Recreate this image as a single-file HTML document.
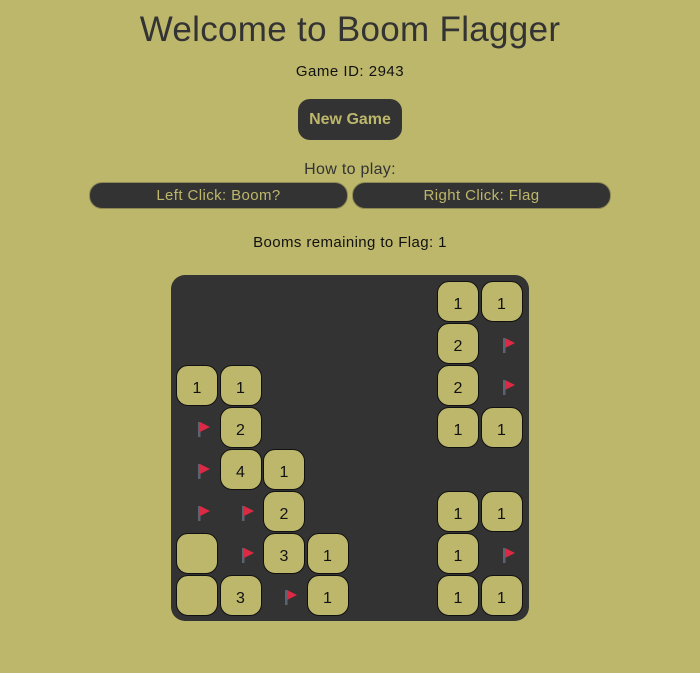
<!DOCTYPE html>
<html><head><style>
body{margin:0;width:700px;height:673px;background:#bdb76b;font-family:"Liberation Sans",sans-serif;color:#111;position:relative;overflow:hidden}
.a{position:absolute;left:0;width:700px;text-align:center}
h1{margin:0;font-weight:normal;font-size:35px;color:#333;letter-spacing:0.3px}
.btn{position:absolute;background:#333;color:#bdb76b}
.board{position:absolute;left:171px;top:275px;width:358px;height:346px;background:#333;border-radius:14px}
.c{position:absolute;width:40px;height:39px;border:1px solid #111;border-radius:12px;background:#bdb76b;text-align:center;line-height:46px;font-size:16px;color:#111}
.f{position:absolute;width:42px;height:41px}
</style></head><body>
<div class="a" style="top:10px"><h1>Welcome to Boom Flagger</h1></div>
<div class="a" style="top:63px;font-size:15px;letter-spacing:0.5px">Game ID: 2943</div>
<div class="btn" style="left:298px;top:99px;width:104px;height:41px;border-radius:12px;font-weight:bold;font-size:16px;line-height:41px;text-align:center">New Game</div>
<div class="a" style="top:161px;font-size:16px;color:#333;letter-spacing:0.3px">How to play:</div>
<div class="btn" style="left:89px;top:182px;width:257px;height:25px;border-radius:13px;border:1px solid #8f8a55;font-size:15px;line-height:25px;text-align:center;letter-spacing:0.4px">Left Click: Boom?</div>
<div class="btn" style="left:352px;top:182px;width:257px;height:25px;border-radius:13px;border:1px solid #8f8a55;font-size:15px;line-height:25px;text-align:center;letter-spacing:0.4px">Right Click: Flag</div>
<div class="a" style="top:234px;font-size:15px;letter-spacing:0.4px">Booms remaining to Flag: 1</div>
<div class="board"></div>
<div id="g"></div>
<script>
var d=[
"......11",
"......2F",
"11....2F",
"F2....11",
"F41.....",
"FF2...11",
" F31..1F",
" 3F1..11"];
var h="";
for(var r=0;r<8;r++)for(var c=0;c<8;c++){var v=d[r][c];var x=176+43.5*c,y=281+42*r;
if(v==".")continue;
if(v=="F"){h+='<svg class="f" style="left:'+x+'px;top:'+y+'px" viewBox="0 0 42 41"><rect x="22" y="15" width="2.5" height="15" fill="#5a6470"/><polygon points="24,15 34,20 24,25" fill="#dc2a45"/></svg>';}
else h+='<div class="c" style="left:'+x+'px;top:'+y+'px">'+(v==" "?"":v)+'</div>';}
document.getElementById("g").innerHTML=h;
</script>
</body></html>
